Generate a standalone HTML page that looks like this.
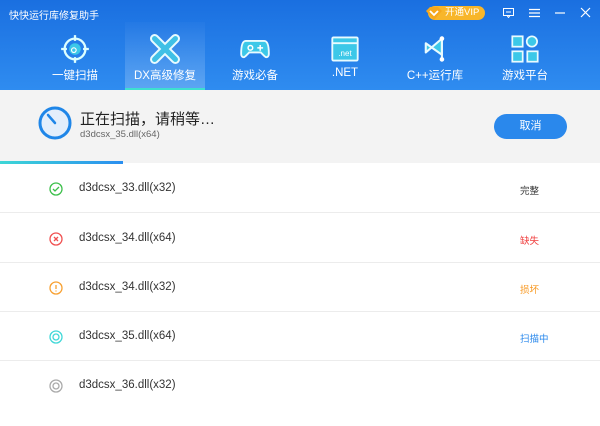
<!DOCTYPE html>
<html><head><meta charset="utf-8"><style>
*{margin:0;padding:0;box-sizing:border-box}
body{width:600px;height:426px;overflow:hidden;font-family:"Liberation Sans","Noto Sans CJK SC",sans-serif;background:#fff;position:relative}
.hdr{position:absolute;left:0;top:0;width:600px;height:90px;background:linear-gradient(180deg,#1a6fe0,#2f8cf0)}
.title{position:absolute;left:9px;top:7px;color:#fff;font-size:10px}
.tab{position:absolute;top:22px;width:80px;height:68px;text-align:center;color:#fff;font-size:11.5px}
.tab svg{position:absolute;left:25px;top:12px}
.tab span{position:absolute;left:0;right:0;top:45px}
.act{background:linear-gradient(180deg,rgba(255,255,255,0.02),rgba(255,255,255,0.22));border-bottom:2px solid #3de0d0}
.vip{position:absolute;left:428px;top:6px;width:57px;height:14px;background:#f8b62a;border-radius:7px;color:#fff;font-size:9.5px;line-height:14px;padding-left:17px}
.bar{position:absolute;left:0;top:90px;width:600px;height:73px;background:#f3f3f3}
.prog{position:absolute;left:0;top:161px;width:123px;height:3px;background:linear-gradient(90deg,#3dd6d6,#2a8ef0)}
.row{position:absolute;left:0;width:600px;height:49px;border-bottom:1px solid #ececec}
.row .n{position:absolute;left:79px;top:18px;font-size:11.5px;color:#333}
.row .s{position:absolute;left:520px;top:19px;font-size:9.5px}
.row svg{position:absolute;left:49px;top:18px}
</style></head><body>
<div class="hdr">
<div class="title">快快运行库修复助手</div>
<div class="vip"><svg style="position:absolute;left:-3px;top:-1px" width="18" height="16" viewBox="0 0 18 16"><path d="M1 6 L5 2 L13 2 L17 6 L9 15Z" fill="#f6a81c"/><path d="M5 6 L9 10 L13 6" stroke="#fff" stroke-width="1.8" fill="none"/></svg>开通VIP</div>
<svg style="position:absolute;left:503px;top:8px" width="11" height="10"><rect x="0.5" y="0.5" width="10" height="7" fill="none" stroke="#fff"/><path d="M4 7.5 L5.5 9.5 L7 7.5" stroke="#fff" fill="none"/><path d="M3 4h5" stroke="#fff"/></svg>
<svg style="position:absolute;left:529px;top:8px" width="11" height="10"><path d="M0 1.5h11M0 5h11M0 8.5h11" stroke="#fff" stroke-width="1.2"/></svg>
<svg style="position:absolute;left:555px;top:8px" width="11" height="10"><path d="M0 5h10" stroke="#fff" stroke-width="1.2"/></svg>
<svg style="position:absolute;left:580px;top:7px" width="11" height="11"><path d="M1 1L10 10M10 1L1 10" stroke="#fff" stroke-width="1.2"/></svg>

<div class="tab" style="left:35px"><svg width="30" height="30" viewBox="0 0 26 26"><circle cx="13" cy="13" r="9" fill="none" stroke="#dff" stroke-width="2"/><path d="M13 1v5M13 20v5M1 13h5M20 13h5" stroke="#dff" stroke-width="2"/><circle cx="13" cy="13" r="5" fill="#3cc8e8"/><circle cx="12" cy="14" r="2" fill="none" stroke="#fff"/></svg><span>一键扫描</span></div>
<div class="tab act" style="left:125px"><svg width="30" height="30" viewBox="0 0 26 26"><path d="M4 4 L22 22 M22 4 L4 22" stroke="#e8fbff" stroke-width="8" stroke-linecap="round"/><path d="M4 4 L22 22 M22 4 L4 22" stroke="#3fc0e6" stroke-width="4.5" stroke-linecap="round"/></svg><span>DX高级修复</span></div>
<div class="tab" style="left:215px"><svg width="30" height="30" viewBox="0 0 26 26"><path d="M5 6h16c3 0 4 5 4 11 0 3-2 4-4 2l-3-3H8l-3 3c-2 2-4 1-4-2C1 11 2 6 5 6Z" fill="#3cc8e8" stroke="#e8fbff" stroke-width="1.6"/><circle cx="9" cy="12" r="2" fill="none" stroke="#fff" stroke-width="1.3"/><path d="M15 12h5M17.5 9.5v5" stroke="#fff" stroke-width="1.3"/></svg><span>游戏必备</span></div>
<div class="tab" style="left:305px"><svg width="30" height="30" viewBox="0 0 26 26"><rect x="2" y="3" width="22" height="20" rx="1" fill="#3cc8e8" stroke="#e8fbff" stroke-width="1.6"/><path d="M2 8h22" stroke="#e8fbff" stroke-width="1.6"/><text x="13" y="19" font-size="7" fill="#fff" text-anchor="middle" font-family="Liberation Sans">.net</text></svg><span>.NET</span></div>
<div class="tab" style="left:395px"><svg width="30" height="30" viewBox="0 0 26 26"><path d="M5 8 L19 18 L19 4 L5 16 Z" fill="#3cc8e8" stroke="#e8fbff" stroke-width="1.8" stroke-linejoin="round"/><path d="M19 4v18" stroke="#e8fbff" stroke-width="1.8"/><circle cx="19" cy="4" r="2" fill="#fff"/><circle cx="19" cy="22" r="2" fill="#fff"/></svg><span>C++运行库</span></div>
<div class="tab" style="left:485px"><svg width="30" height="30" viewBox="0 0 26 26"><rect x="2" y="2" width="9" height="9" fill="#3cc8e8" stroke="#e8fbff" stroke-width="1.5"/><circle cx="19" cy="6.5" r="4.5" fill="#3cc8e8" stroke="#e8fbff" stroke-width="1.5"/><rect x="2" y="15" width="9" height="9" fill="#3cc8e8" stroke="#e8fbff" stroke-width="1.5"/><rect x="15" y="15" width="9" height="9" fill="#3cc8e8" stroke="#e8fbff" stroke-width="1.5"/></svg><span>游戏平台</span></div>
</div>
<div class="bar">
<svg style="position:absolute;left:37px;top:15px" width="36" height="36" viewBox="0 0 36 36"><circle cx="18" cy="18" r="15" fill="#e3eefb" stroke="#1f86e8" stroke-width="3"/><path d="M11 10 L18 18" stroke="#1f86e8" stroke-width="2.5" stroke-linecap="round"/></svg>
<div style="position:absolute;left:80px;top:18px;font-size:15px;color:#222">正在扫描，请稍等…</div>
<div style="position:absolute;left:80px;top:39px;font-size:9.5px;color:#666">d3dcsx_35.dll(x64)</div>
<div style="position:absolute;left:494px;top:24px;width:73px;height:25px;border-radius:13px;background:#2a88ec;color:#fff;font-size:11px;text-align:center;line-height:25px">取消</div>
</div>
<div class="prog"></div>
<div class="row" style="top:164px"><svg width="14" height="14"><circle cx="7" cy="7" r="6" fill="none" stroke="#3bbf4a" stroke-width="1.3"/><path d="M4 7l2 2 4-4" stroke="#3bbf4a" stroke-width="1.3" fill="none"/></svg><div class="n">d3dcsx_33.dll(x32)</div><div class="s" style="color:#333">完整</div></div>
<div class="row" style="top:214px"><svg width="14" height="14"><circle cx="7" cy="7" r="6" fill="none" stroke="#f05050" stroke-width="1.3"/><path d="M5 5l4 4M9 5l-4 4" stroke="#f05050" stroke-width="1.3"/></svg><div class="n">d3dcsx_34.dll(x64)</div><div class="s" style="color:#f04040">缺失</div></div>
<div class="row" style="top:263px"><svg width="14" height="14"><circle cx="7" cy="7" r="6" fill="none" stroke="#f8a030" stroke-width="1.3"/><path d="M7 4v4M7 9.5v1" stroke="#f8a030" stroke-width="1.3"/></svg><div class="n">d3dcsx_34.dll(x32)</div><div class="s" style="color:#f89820">损坏</div></div>
<div class="row" style="top:312px"><svg width="14" height="14"><circle cx="7" cy="7" r="6" fill="none" stroke="#40d8d8" stroke-width="1.3"/><circle cx="7" cy="7" r="3" fill="none" stroke="#40d8d8" stroke-width="1.3"/></svg><div class="n">d3dcsx_35.dll(x64)</div><div class="s" style="color:#2a88ec">扫描中</div></div>
<div class="row" style="top:361px;border-bottom:none"><svg width="14" height="14"><circle cx="7" cy="7" r="6" fill="none" stroke="#aaa" stroke-width="1.3"/><circle cx="7" cy="7" r="3" fill="none" stroke="#aaa" stroke-width="1.3"/></svg><div class="n">d3dcsx_36.dll(x32)</div></div>
</body></html>
